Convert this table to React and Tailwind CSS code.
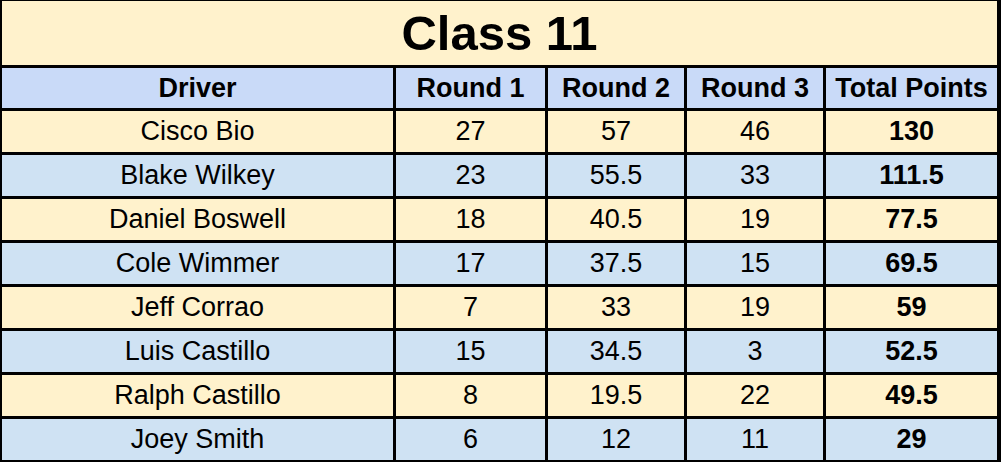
import React from "react";

const rows = [
  ["Cisco Bio", "27", "57", "46", "130"],
  ["Blake Wilkey", "23", "55.5", "33", "111.5"],
  ["Daniel Boswell", "18", "40.5", "19", "77.5"],
  ["Cole Wimmer", "17", "37.5", "15", "69.5"],
  ["Jeff Corrao", "7", "33", "19", "59"],
  ["Luis Castillo", "15", "34.5", "3", "52.5"],
  ["Ralph Castillo", "8", "19.5", "22", "49.5"],
  ["Joey Smith", "6", "12", "11", "29"],
];

const headers = ["Driver", "Round 1", "Round 2", "Round 3", "Total Points"];

const App = () => {
  return (
    <div
      className="w-[1001px] h-[462px] bg-black pt-[1px] pl-[2px] pr-[4px] pb-[2px] grid grid-cols-[391px_149px_136px_136px_171px] grid-rows-[64px_40px_repeat(8,41px)] gap-[3px] text-black"
      style={{ fontFamily: '"Liberation Sans", Arial, sans-serif' }}
    >
      {/* Title */}
      <div className="col-span-5 bg-[#fff2cc] flex items-center justify-center text-[49px] font-bold leading-none">
        Class 11
      </div>

      {/* Header */}
      {headers.map((h) => (
        <div
          key={h}
          className="bg-[#c9daf8] flex items-center justify-center text-[27px] font-bold leading-none"
        >
          {h}
        </div>
      ))}

      {/* Rows */}
      {rows.map((row, i) =>
        row.map((cell, j) => (
          <div
            key={`${i}-${j}`}
            className={`${
              i % 2 === 0 ? "bg-[#fff2cc]" : "bg-[#cfe2f3]"
            } flex items-center justify-center text-[27px] leading-none ${
              j === 4 ? "font-bold" : ""
            }`}
          >
            {cell}
          </div>
        ))
      )}
    </div>
  );
};

export default App;
